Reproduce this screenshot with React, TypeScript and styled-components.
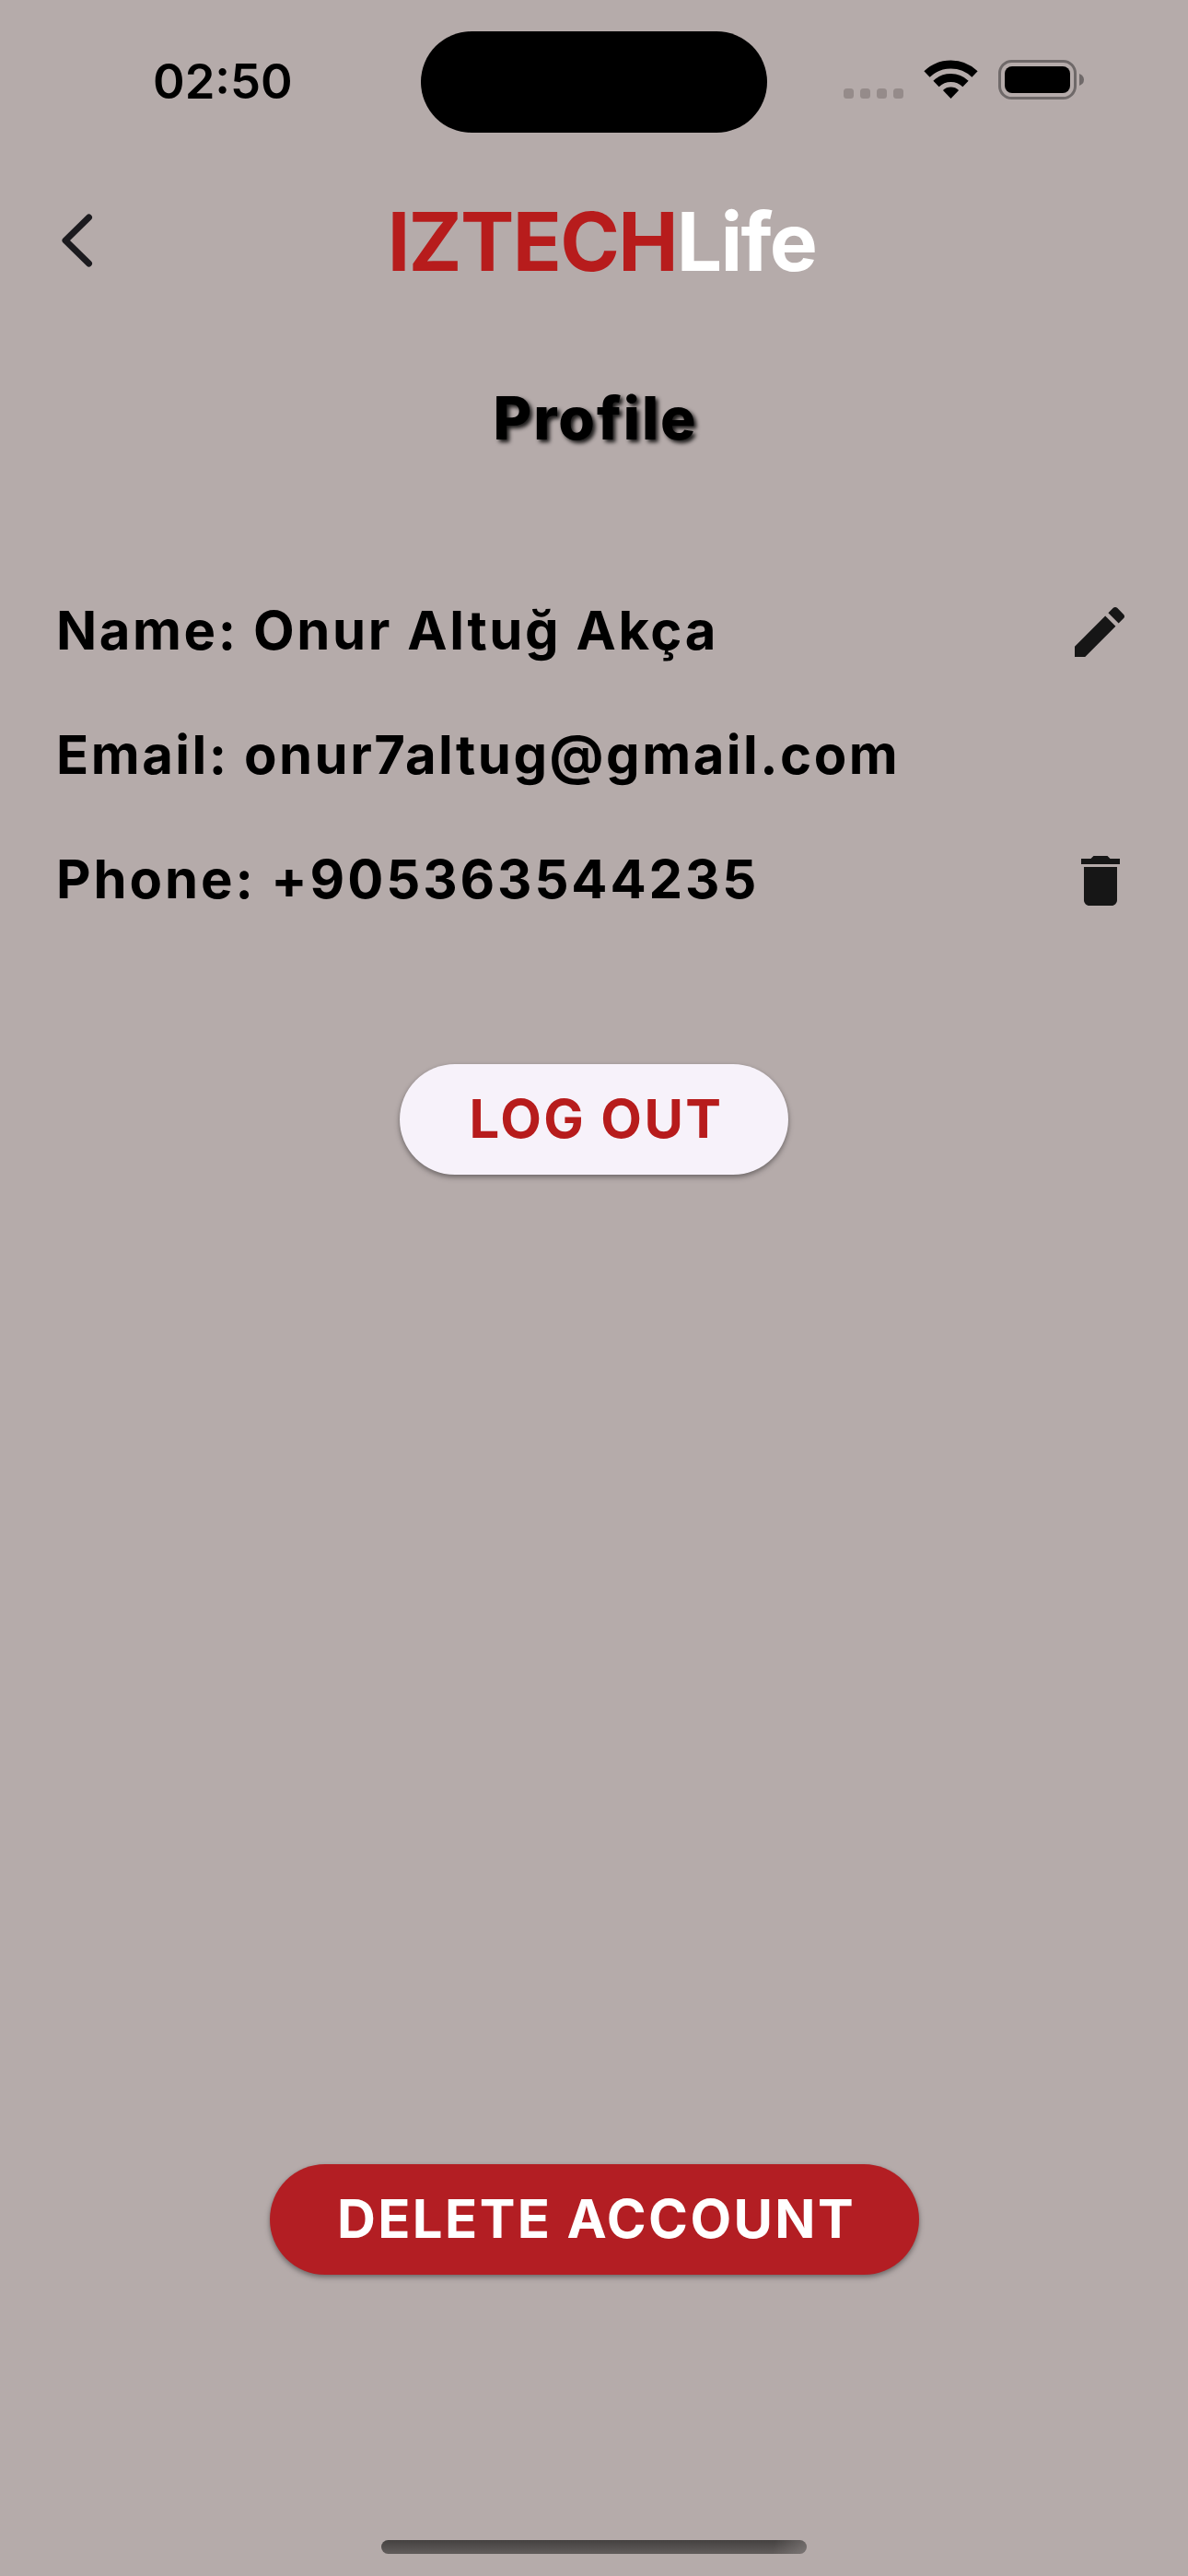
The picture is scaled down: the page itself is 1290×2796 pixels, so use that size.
import React from "react";
import styled, { createGlobalStyle } from "styled-components";

const Global = createGlobalStyle`
  html, body { margin: 0; padding: 0; background: #b5abaa; }
  * { box-sizing: border-box; }
`;

const Screen = styled.main`
  width: 1290px;
  height: 2796px;
  display: flex;
  flex-direction: column;
  background: #b5abaa;
  color: #000;
  font-family: Inter, "Liberation Sans", sans-serif;
  overflow: hidden;
`;

const StatusBar = styled.div`
  height: 177px;
  padding: 34px 113px 0 166px;
  display: grid;
  grid-template-columns: 291px 376px 1fr;
  align-items: start;
`;

const Clock = styled.time`
  margin-top: 22px;
  font-size: 52.5px;
  line-height: 64px;
  font-weight: 600;
  letter-spacing: 0;
`;

const Island = styled.div`
  height: 110px;
  border-radius: 55px;
  background: #000;
`;

const StatusIcons = styled.div`
  margin-top: 31px;
  height: 43px;
  display: flex;
  justify-content: flex-end;
`;

const AppBar = styled.header`
  height: 168px;
  display: grid;
  grid-template-columns: 150px 1fr 150px;
  align-items: center;
`;

const BackButton = styled.button`
  height: 72px;
  padding: 0 0 0 60px;
  border: 0;
  background: none;
  display: flex;
`;

const Logo = styled.h1`
  margin: 0 0 0 17px;
  padding-top: 1px;
  text-align: center;
  font-size: 87.5px;
  line-height: 108px;
  font-weight: 700;
  letter-spacing: -1.7px;
  color: #b71c1c;
  white-space: nowrap;
`;

const LogoAccent = styled.span`
  color: #fff;
`;

const Title = styled.h2`
  margin: 69px 0 0;
  padding-left: 3px;
  text-align: center;
  font-size: 64px;
  line-height: 80px;
  font-weight: 800;
  letter-spacing: 2px;
  text-shadow: 3px 3px 4px rgba(0, 0, 0, 0.85);
`;

const Details = styled.section`
  margin-top: 124px;
  padding: 0 60px 0 61px;
`;

const Row = styled.div`
  height: 135px;
  display: flex;
  align-items: center;
  justify-content: space-between;
`;

const Field = styled.span<{ $spacing: number }>`
  padding-bottom: 3px;
  font-size: 58px;
  line-height: 72px;
  font-weight: 700;
  letter-spacing: ${(p) => p.$spacing}px;
  white-space: nowrap;
`;

const Pill = styled.button<{ $bg: string; $fg: string; $width: number }>`
  align-self: center;
  width: ${(p) => p.$width}px;
  height: 120px;
  padding: 0 0 2px 5px;
  border: 0;
  border-radius: 60px;
  background: ${(p) => p.$bg};
  color: ${(p) => p.$fg};
  box-shadow: 0 3px 6px rgba(0, 0, 0, 0.28), 0 2px 4px rgba(0, 0, 0, 0.16);
  font-family: inherit;
  font-size: 58px;
  line-height: 72px;
  font-weight: 700;
  letter-spacing: 2.4px;
  white-space: nowrap;
`;

const Actions = styled.div`
  flex: 1;
  padding: 132px 0 288px;
  display: flex;
  flex-direction: column;
  justify-content: space-between;
`;

const HomeIndicator = styled.div`
  width: 462px;
  height: 15px;
  margin: 0 auto 24px;
  border-radius: 8px;
  background:
    linear-gradient(100deg, transparent 92%, rgba(150, 143, 142, 0.5) 100%),
    linear-gradient(180deg, #444140, #625d5c);
`;

const StatusGlyphs = () => (
  <svg width="262" height="43" viewBox="915 65 262 43">
    <g fill="#958b8a">
      {[916, 934, 952, 970].map((x) => (
        <rect key={x} x={x} y="96" width="11" height="11" rx="3.5" />
      ))}
    </g>
    <g fill="none" stroke="#000" strokeWidth="9">
      <path d="M1006.500 80.500A37.500 37.500 0 0 1 1058.500 80.500" />
      <path d="M1016.500 91A23 23 0 0 1 1048.500 91" />
    </g>
    <path d="M1032.500 107l-8.600-9a12.500 12.500 0 0 1 17.200 0z" />
    <rect x="1085.5" y="66.5" width="82" height="40" rx="13" fill="none" stroke="#6f6969" strokeWidth="3" />
    <rect x="1091" y="72" width="71" height="29" rx="8" />
    <path d="M1172 80q5 2 5 6.500t-5 6.500z" fill="#6f6969" />
  </svg>
);

const BackIcon = () => (
  <svg width="72" height="72" viewBox="60 225 72 72">
    <path d="M96.500 236L71 261L96.500 286" fill="none" stroke="#1c1b1f" strokeWidth="7" strokeLinecap="round" strokeLinejoin="round" />
  </svg>
);

const ActionIcon = ({ d }: { d: string }) => (
  <svg width="72" height="72" viewBox="0 0 24 24" fill="#161616">
    <path d={d} />
  </svg>
);

const EDIT =
  "M3 17.25V21h3.750L17.810 9.940l-3.750-3.750L3 17.250zM20.710 7.040c.39-.39.39-1.020 0-1.410l-2.340-2.340c-.39-.39-1.020-.39-1.410 0l-1.830 1.830 3.750 3.750 1.830-1.830z";
const DELETE =
  "M6.330 19c0 1.100.9 2 2 2h8c1.100 0 2-.9 2-2V7h-12v12zM19.330 4h-3.500l-1-1h-5l-1 1h-3.500v2h14V4z";

export default function App() {
  return (
    <Screen>
      <Global />
      <StatusBar>
        <Clock>02:50</Clock>
        <Island />
        <StatusIcons>
          <StatusGlyphs />
        </StatusIcons>
      </StatusBar>
      <AppBar>
        <BackButton aria-label="Back">
          <BackIcon />
        </BackButton>
        <Logo>
          IZTECH<LogoAccent>Life</LogoAccent>
        </Logo>
      </AppBar>
      <Title>Profile</Title>
      <Details>
        <Row>
          <Field $spacing={2.6}>Name: Onur Altuğ Akça</Field>
          <ActionIcon d={EDIT} />
        </Row>
        <Row>
          <Field $spacing={2.5}>Email: onur7altug@gmail.com</Field>
        </Row>
        <Row>
          <Field $spacing={2.9}>Phone: +905363544235</Field>
          <ActionIcon d={DELETE} />
        </Row>
      </Details>
      <Actions>
        <Pill $bg="#f7f2fa" $fg="#b71c1c" $width={422}>LOG OUT</Pill>
        <Pill $bg="#b31e23" $fg="#fff" $width={705}>DELETE ACCOUNT</Pill>
      </Actions>
      <HomeIndicator />
    </Screen>
  );
}
